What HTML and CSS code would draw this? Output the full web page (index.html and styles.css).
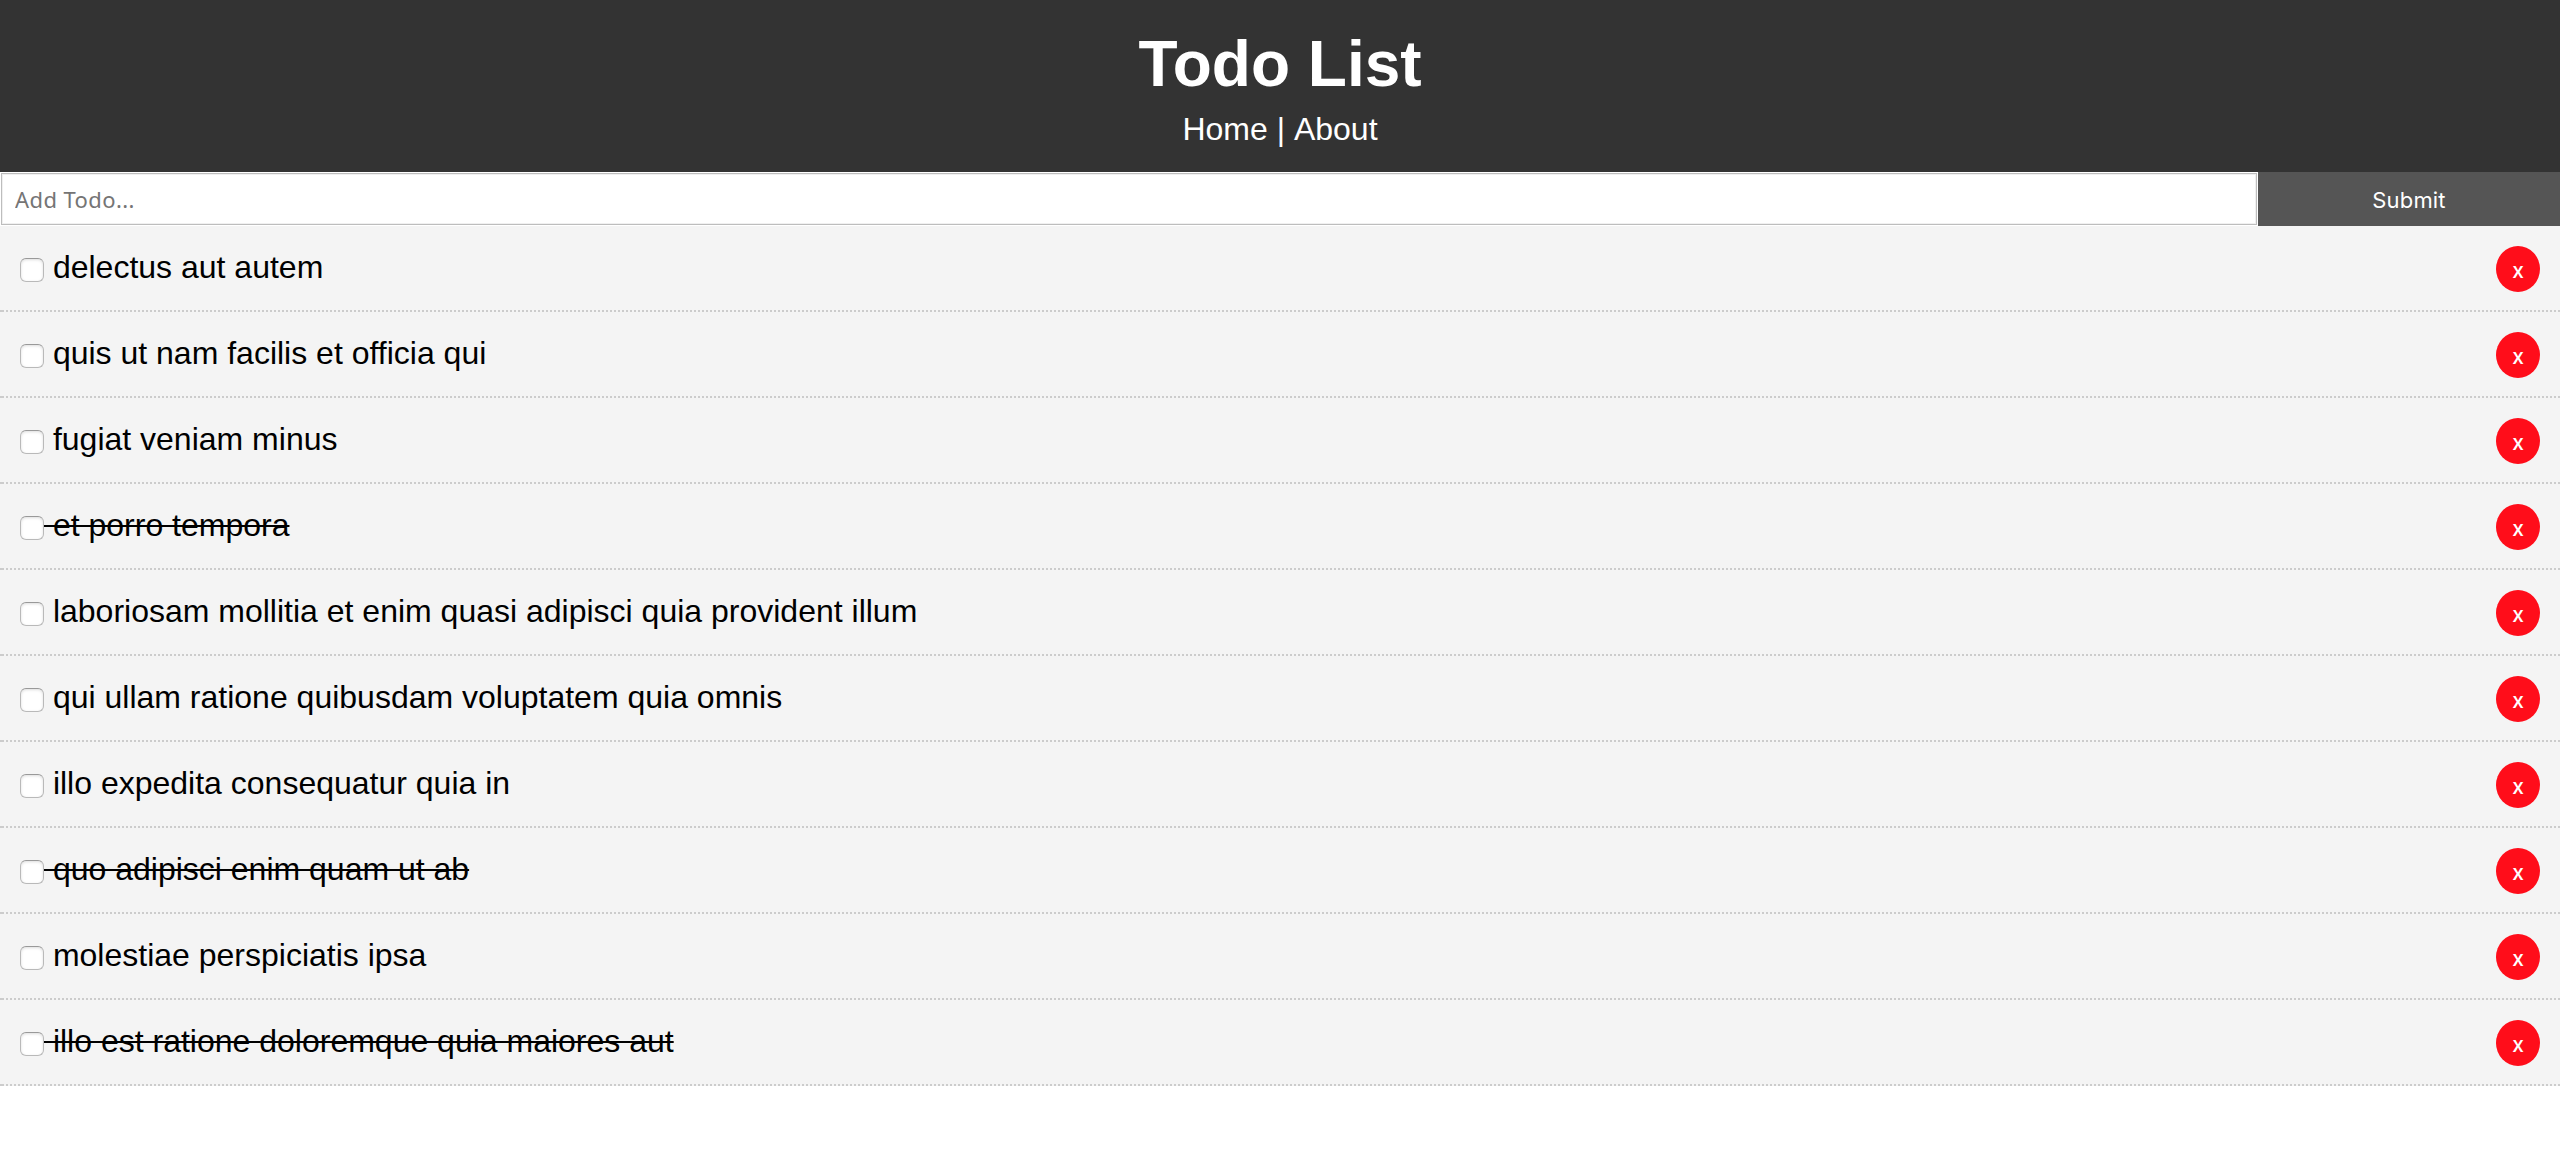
FILE: index.html
```html
<!DOCTYPE html>
<html lang="en">
<head>
<meta charset="utf-8">
<title>Todo List</title>
<link rel="stylesheet" href="styles.css">
</head>
<body>
<header class="header">
  <h1 class="title">Todo List</h1>
  <nav class="nav"><a class="link" href="#">Home</a> | <a class="link" href="#">About</a></nav>
</header>
<form class="add-form">
  <input class="add-input" type="text" placeholder="Add Todo...">
  <button class="submit" type="button">Submit</button>
</form>
<main class="list">
  <div class="todo"><input class="check" type="checkbox"><p class="label"> delectus aut autem</p><button class="delete">x</button></div>
  <div class="todo"><input class="check" type="checkbox"><p class="label"> quis ut nam facilis et officia qui</p><button class="delete">x</button></div>
  <div class="todo"><input class="check" type="checkbox"><p class="label"> fugiat veniam minus</p><button class="delete">x</button></div>
  <div class="todo"><input class="check" type="checkbox"><p class="label done"> et porro tempora</p><button class="delete">x</button></div>
  <div class="todo"><input class="check" type="checkbox"><p class="label"> laboriosam mollitia et enim quasi adipisci quia provident illum</p><button class="delete">x</button></div>
  <div class="todo"><input class="check" type="checkbox"><p class="label"> qui ullam ratione quibusdam voluptatem quia omnis</p><button class="delete">x</button></div>
  <div class="todo"><input class="check" type="checkbox"><p class="label"> illo expedita consequatur quia in</p><button class="delete">x</button></div>
  <div class="todo"><input class="check" type="checkbox"><p class="label done"> quo adipisci enim quam ut ab</p><button class="delete">x</button></div>
  <div class="todo"><input class="check" type="checkbox"><p class="label"> molestiae perspiciatis ipsa</p><button class="delete">x</button></div>
  <div class="todo"><input class="check" type="checkbox"><p class="label done"> illo est ratione doloremque quia maiores aut</p><button class="delete">x</button></div>
</main>
</body>
</html>
```
FILE: styles.css
```css
* {
  box-sizing: border-box;
  margin: 0;
  padding: 0;
}

body {
  background: #fff;
  color: #000;
  font-family: "Liberation Sans", Arial, sans-serif;
  font-size: 32px;
  line-height: 42px;
}

.header {
  height: 172px;
  padding-top: 20px;
  background: #333;
  color: #fff;
  text-align: center;
}

.title {
  font-size: 64px;
  line-height: 88px;
}

.nav {
  font-kerning: none;
}

.link {
  color: #fff;
  text-decoration: none;
}

.add-form {
  display: flex;
  height: 54px;
}

.add-input {
  flex: 1;
  min-width: 0;
  margin: 1px;
  padding: 0 11px 0 13px;
  border: 1px solid #bdbdbd;
  box-shadow: inset 0 0 0 1px #f0f0f0;
  background: #fff;
  font-family: "Noto Sans", sans-serif;
  font-size: 22px;
  letter-spacing: 0.4px;
  outline: none;
}

.add-input::placeholder {
  color: #757575;
  opacity: 1;
}

.submit {
  width: 302px;
  padding-top: 2px;
  border: 0;
  background: #555;
  color: #fff;
  font-family: Inter, sans-serif;
  font-size: 22px;
  letter-spacing: 0.15px;
}

.todo {
  display: flex;
  align-items: flex-start;
  height: 86px;
  padding: 20px;
  background:
    linear-gradient(#ccc, #ccc) 0 100% / 2px 2px no-repeat,
    linear-gradient(90deg, transparent 50%, #ccc 50%) 0 100% / 4px 2px repeat-x,
    #f4f4f4;
}

.todo:last-child {
  background-color: #f4f4f4;
}

.check {
  appearance: none;
  width: 24px;
  height: 24px;
  margin-top: 12px;
  border: 1px solid #b9b9b9;
  border-top-color: #999;
  border-radius: 6px;
  background: #fff;
  box-shadow: inset 0 1px 3px #ddd;
}

.label {
  flex: 1;
  white-space: pre;
}

.done {
  text-decoration: line-through 2px;
}

.delete {
  width: 44px;
  height: 46px;
  padding-top: 3px;
  border: 0;
  border-radius: 50%;
  background: #ff0d1a;
  color: #fff;
  font-family: Inter, sans-serif;
  font-size: 21px;
  font-weight: 500;
  line-height: 26px;
}
```
